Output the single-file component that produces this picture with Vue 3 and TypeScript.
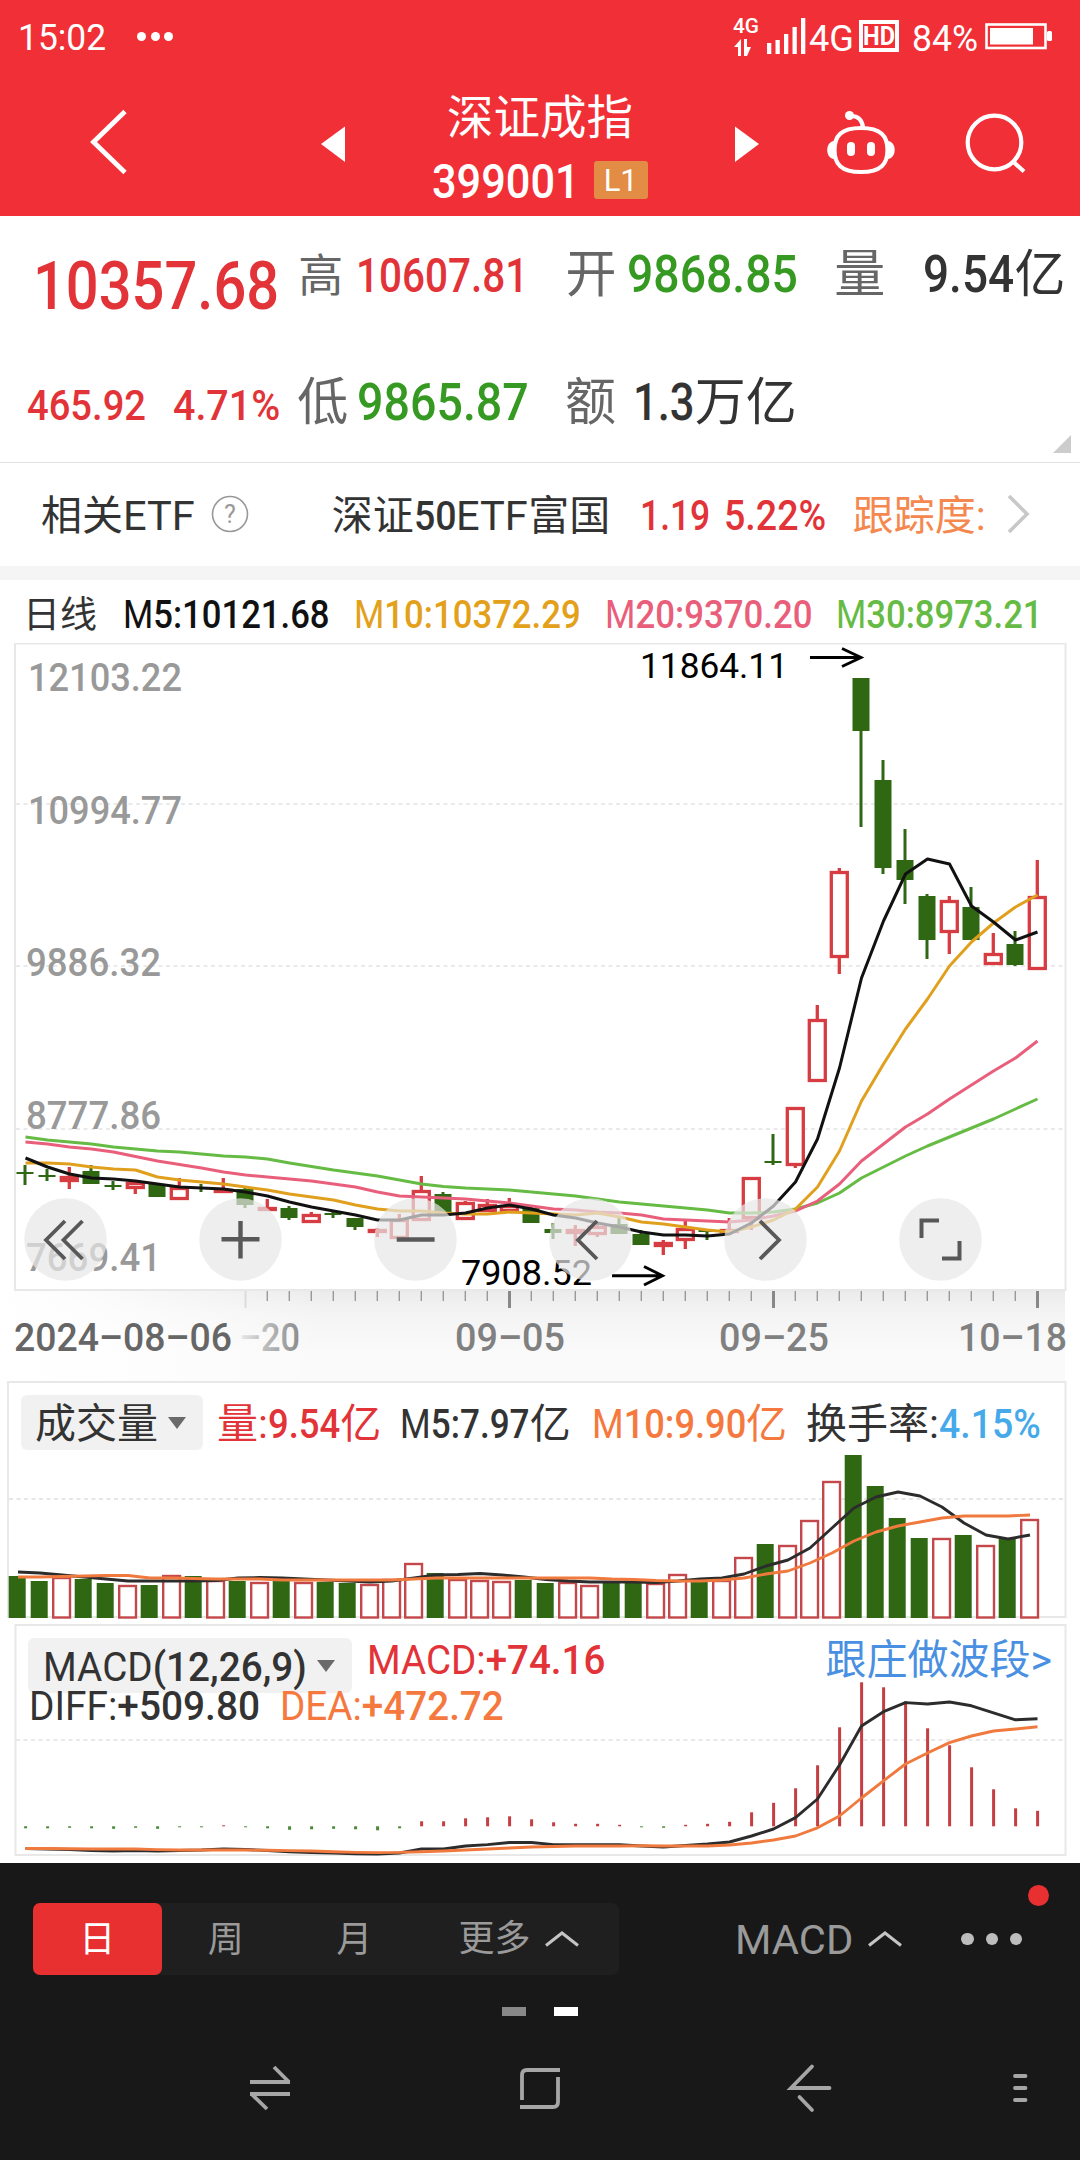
<script setup lang="ts">
// Squeezes a run of text to the given width, like the condensed numerals of the quote font.
const vFit = {
  mounted(el: HTMLElement, binding: { value: number }) {
    const natural = el.offsetWidth
    if (!natural) return
    el.style.transform = `scaleX(${binding.value / natural})`
    el.style.marginRight = `${binding.value - natural}px`
  },
}

type Candle = [kind: 'u' | 'd', high: number, top: number, bottom: number, low: number]

const candles: Candle[] = [
  ['d', 1165, 1172, 1174, 1185], ['d', 1169, 1175, 1177, 1181], ['u', 1167, 1176, 1182, 1189],
  ['d', 1165, 1171, 1184, 1184], ['d', 1181, 1185, 1187, 1190], ['u', 1181, 1182, 1189, 1194],
  ['d', 1183, 1184, 1197, 1197], ['u', 1178, 1187, 1200, 1200], ['d', 1184, 1187, 1189, 1192],
  ['u', 1178, 1189, 1193, 1193], ['d', 1187, 1189, 1205, 1208], ['u', 1199, 1207, 1211, 1211],
  ['d', 1206, 1208, 1218, 1220], ['u', 1212, 1214, 1223, 1223], ['d', 1211, 1213, 1215, 1218],
  ['d', 1218, 1218, 1227, 1230], ['u', 1228, 1229, 1233, 1237], ['u', 1214, 1219, 1239, 1239],
  ['u', 1176, 1190, 1221, 1221], ['d', 1192, 1194, 1213, 1213], ['u', 1201, 1202, 1220, 1220],
  ['u', 1199, 1204, 1212, 1212], ['u', 1198, 1205, 1212, 1212], ['d', 1207, 1208, 1223, 1223],
  ['d', 1223, 1229, 1233, 1239], ['u', 1225, 1229, 1234, 1246], ['u', 1223, 1226, 1235, 1237],
  ['d', 1217, 1224, 1234, 1234], ['d', 1230, 1234, 1245, 1245], ['u', 1240, 1242, 1247, 1255],
  ['u', 1219, 1228, 1241, 1249], ['d', 1229, 1230, 1232, 1240], ['u', 1218, 1229, 1233, 1233],
  ['u', 1177, 1177, 1219, 1230], ['d', 1134, 1161, 1163, 1165], ['u', 1107, 1107, 1166, 1168],
  ['u', 1005, 1019, 1082, 1082], ['u', 868, 871, 958, 974], ['d', 678, 678, 731, 827],
  ['d', 760, 780, 868, 874], ['d', 829, 860, 880, 904], ['d', 894, 896, 940, 959],
  ['u', 896, 900, 933, 954], ['d', 887, 907, 940, 940], ['u', 933, 953, 965, 965],
  ['d', 931, 944, 965, 966], ['u', 860, 896, 970, 970],
]

const ma5 = [1158, 1167, 1174, 1178, 1179, 1181, 1184, 1187, 1188, 1189, 1192, 1196, 1202, 1207, 1211, 1215, 1220, 1220, 1215, 1215, 1213, 1208, 1205, 1209, 1215, 1218, 1223, 1227, 1232, 1235, 1235, 1236, 1234, 1223, 1206, 1182, 1139, 1068, 978, 921, 874, 859, 864, 906, 922, 940, 932]
const ma10 = [1163, 1163, 1164, 1167, 1169, 1170, 1177, 1180, 1182, 1184, 1187, 1190, 1194, 1197, 1200, 1205, 1209, 1211, 1211, 1213, 1214, 1214, 1212, 1213, 1214, 1215, 1213, 1217, 1222, 1224, 1227, 1230, 1232, 1227, 1220, 1209, 1187, 1151, 1101, 1064, 1029, 999, 966, 942, 923, 907, 895]
const ma20 = [1142, 1144, 1147, 1149, 1152, 1156.5, 1161, 1164.5, 1168, 1172, 1175, 1177, 1179, 1181, 1184, 1187, 1192, 1196, 1197, 1198, 1199, 1201, 1203, 1206, 1209, 1210, 1212, 1213, 1215, 1219, 1220, 1221, 1222, 1220, 1216, 1211, 1201, 1184, 1161, 1144, 1127, 1114, 1099, 1085, 1071, 1058, 1041]
const ma30 = [1137, 1140, 1142, 1144, 1147, 1149, 1151, 1152, 1154, 1156, 1157, 1159, 1163, 1166.5, 1170, 1173, 1176, 1180, 1184, 1186.5, 1188, 1189, 1190, 1192, 1194, 1196, 1199, 1202, 1204, 1206, 1208, 1210, 1213, 1213, 1212, 1209, 1203, 1193, 1178, 1167, 1156, 1146, 1137, 1128, 1119, 1109, 1099]

const volumeTops = [1576, 1581, 1577, 1579, 1583, 1585, 1585, 1575, 1576, 1580, 1581, 1582, 1581, 1582, 1582, 1583, 1584, 1579, 1563, 1573, 1579, 1580, 1581, 1580, 1583, 1582, 1585, 1583, 1583, 1583, 1574, 1582, 1580, 1557, 1544, 1545, 1520, 1481, 1455, 1486, 1518, 1538, 1538, 1535, 1545, 1538, 1519]
const volM5 = [1572, 1573, 1575, 1577, 1579, 1581, 1581, 1581, 1581, 1580.5, 1578, 1577.5, 1578, 1579, 1580, 1581, 1582, 1581, 1578, 1575, 1574.5, 1573.5, 1575, 1577, 1579.5, 1581, 1582, 1582, 1582, 1582.5, 1581, 1579, 1578, 1574, 1566, 1560, 1548, 1528, 1508, 1497, 1492, 1496, 1507, 1523, 1535, 1539, 1535]
const volM10 = [1577, 1577, 1576.5, 1576, 1575.5, 1575.5, 1578, 1578, 1578.5, 1579, 1579, 1579, 1580, 1580, 1580, 1580, 1580, 1580, 1579, 1578, 1578, 1578, 1578, 1578, 1578, 1578, 1578, 1579, 1579.5, 1580.5, 1581, 1581, 1580, 1578, 1574, 1571, 1563, 1553, 1541, 1532, 1526, 1522, 1518, 1516, 1516, 1516, 1515]

const hist = [-2, -2, -1.5, -2, -2.5, -1.5, -2.5, -1, -1, 1, -1, -2, -3.5, -3, -2.5, -3, -4, -2, 5, 5, 8, 9, 10, 7, 4, 2.5, 2.5, 1.5, -1, -1.5, 1.5, 2.5, 4.5, 14, 23.5, 38, 61, 99, 144, 139, 125, 98, 81, 59, 37, 18, 15.5]
const diff = [1848.5, 1849, 1849.5, 1850.5, 1851, 1850.5, 1851, 1850.5, 1850, 1849, 1849.5, 1850.5, 1851.7, 1852.5, 1853, 1853.8, 1854, 1853, 1849, 1849, 1846, 1844.6, 1842.5, 1842.5, 1844.6, 1844.6, 1844.6, 1844.8, 1846, 1847, 1845.5, 1844, 1842, 1836, 1829, 1817.6, 1799, 1765, 1726, 1711.7, 1702.6, 1704, 1702, 1705.8, 1712.8, 1719.8, 1718.7]
const dea = [1848.5, 1848.5, 1848.8, 1849, 1849, 1849, 1849.6, 1850, 1850, 1850, 1850, 1850.3, 1850.6, 1851, 1851.8, 1852.4, 1852.6, 1852.4, 1851.7, 1851, 1850, 1849, 1848, 1847, 1846.5, 1846, 1846, 1846, 1845.8, 1846, 1846, 1846, 1845, 1843, 1840, 1836, 1827.8, 1816, 1798, 1780.8, 1764, 1753, 1742.6, 1736, 1731, 1729, 1726.8]

const STEP = 22
const line = (ys: number[], start: number): string => ys.map((y, i) => `${start + i * STEP},${y}`).join(' ')

const smallTicks = Array.from({ length: 35 }, (_, k) => k + 11).filter((i) => i !== 22 && i !== 34)
const priceLabels = [
  { t: '12103.22', x: 28, y: 691, w: 154 },
  { t: '10994.77', x: 28, y: 824, w: 154 },
  { t: '9886.32', x: 26, y: 976, w: 135 },
  { t: '8777.86', x: 26, y: 1129, w: 135 },
  { t: '7669.41', x: 26, y: 1271, w: 135 },
]
</script>

<template>
  <div class="screen">
    <header class="top">
      <div class="status">
        <span v-fit="88" class="clock">15:02</span>
        <i class="pip first"></i><i class="pip"></i><i class="pip"></i>
        <svg class="signal" width="330" height="72" viewBox="730 0 330 72" fill="#fff">
          <text x="733" y="33" font-size="21" font-weight="500" textLength="26" lengthAdjust="spacingAndGlyphs">4G</text>
          <path d="M741 39v17h-3v-9h-4zM744 56V39h3v8h4l-4 9z" />
          <rect x="767" y="43" width="4.3" height="11" /><rect x="775.5" y="40" width="4.3" height="14" />
          <rect x="784" y="34" width="4.3" height="20" /><rect x="792.5" y="27" width="4.3" height="27" />
          <rect x="801" y="18" width="4.3" height="36" />
          <text x="809" y="51" font-size="37" textLength="45" lengthAdjust="spacingAndGlyphs">4G</text>
          <rect x="861" y="22" width="36" height="28" fill="none" stroke="#fff" stroke-width="4" />
          <text x="863" y="45" font-size="25" font-weight="700" textLength="32" lengthAdjust="spacingAndGlyphs">HD</text>
          <text x="912" y="50.500" font-size="36" textLength="66" lengthAdjust="spacingAndGlyphs">84%</text>
          <rect x="986.5" y="24.5" width="59" height="23.5" fill="none" stroke="#fff" stroke-width="2.6" />
          <rect x="990" y="28" width="43" height="16.5" /><rect x="1047" y="31" width="5" height="10" rx="1.5" />
        </svg>
      </div>
      <div class="titlebar">
        <svg class="side" width="400" height="144" viewBox="0 72 400 144">
          <path d="M125 111.5 93.5 142 125 172.500" fill="none" stroke="#fff" stroke-width="4.800" />
          <path d="M321 144 345 126.500V162z" fill="#fff" />
        </svg>
        <div class="title">
          <div class="name">深证成指</div>
          <div class="code"><span v-fit="148" class="digits">399001</span><span class="badge">L1</span></div>
        </div>
        <svg class="side" width="400" height="144" viewBox="680 72 400 144" fill="none" stroke="#fff" stroke-width="4.200">
          <path d="M735 126.500 759 144 735 162z" fill="#fff" stroke="none" />
          <path d="M861 128c20 0 26.500 8 26.500 22s-6.500 22-26.500 22-26.500-8-26.500-22 6.500-22 26.500-22z" />
          <path d="M863 127c-1-7-5-11-12-11" />
          <circle cx="849.500" cy="115.500" r="4.500" fill="#fff" stroke="none" />
          <path d="M834 141c-9 1-9 17 0 18zM888 141c9 1 9 17 0 18z" fill="#fff" stroke="none" />
          <rect x="847" y="142" width="8" height="14" rx="4" fill="#fff" stroke="none" />
          <rect x="867" y="142" width="8" height="14" rx="4" fill="#fff" stroke="none" />
          <circle cx="994.500" cy="142.500" r="26.800" />
          <path d="M1013 161.500 1024 171.500" />
        </svg>
      </div>
    </header>

    <section class="quote">
      <div class="qrow r1">
        <span v-fit="246" class="price red">10357.68</span>
        <span class="lab high">高</span><span v-fit="172" class="n47 red g15">10607.81</span>
        <span class="lab big open">开</span><span v-fit="171" class="n52 green g12">9868.85</span>
        <span class="lab big vol">量</span><span v-fit="91" class="n52 g38">9.54</span><span class="cjk51">亿</span>
      </div>
      <div class="qrow r2">
        <span v-fit="119" class="n42 red">465.92</span><span v-fit="107" class="n42 red g27">4.71%</span>
        <span class="lab big low">低</span><span v-fit="172" class="n52 green g9">9865.87</span>
        <span class="lab big amt">额</span><span v-fit="62" class="n52 g16">1.3</span><span class="cjk51">万亿</span>
      </div>
      <i class="corner"></i>
    </section>

    <section class="etf">
      <span class="t41">相关</span><span v-fit="72" class="lat">ETF</span>
      <svg class="help" width="38" height="38" viewBox="0 0 38 38">
        <circle cx="19" cy="19" r="17.500" fill="none" stroke="#999" stroke-width="1.600" />
        <text x="19" y="28" text-anchor="middle" font-size="25" fill="#999">?</text>
      </svg>
      <span class="t41 fund">深证</span><span v-fit="43" class="lat mid">50</span><span v-fit="72" class="lat">ETF</span><span class="t41">富国</span>
      <span v-fit="70" class="n42 red e1">1.19</span><span v-fit="102" class="n42 red e2">5.22%</span>
      <span class="t41 track">跟踪度:</span>
      <svg class="more" width="24" height="40" viewBox="0 0 24 40"><path d="M2 2 20 20 2 38" fill="none" stroke="#c8c8c8" stroke-width="3.600" /></svg>
    </section>
    <div class="band"></div>

    <section class="kline">
      <div class="legend">
        <span class="t36">日线</span>
        <span v-fit="207" class="n39 k5"><b>M</b>5:10121.68</span>
        <span v-fit="227" class="n39 k10"><b>M</b>10:10372.29</span>
        <span v-fit="208" class="n39 k20"><b>M</b>20:9370.20</span>
        <span v-fit="207" class="n39 k30"><b>M</b>30:8973.21</span>
      </div>
      <div class="plot">
        <svg width="1080" height="739" viewBox="0 643 1080 739">
          <defs>
            <linearGradient id="shade" x1="0" y1="0" x2="0" y2="1">
              <stop offset="0" stop-color="#ebebeb" /><stop offset=".25" stop-color="#f4f4f4" />
              <stop offset=".7" stop-color="#fafafa" /><stop offset="1" stop-color="#fafafa" />
            </linearGradient>
            <linearGradient id="veil" x1="0" y1="0" x2="1" y2="0">
              <stop offset="0" stop-color="#fff" /><stop offset=".3" stop-color="#fff" stop-opacity=".8" />
              <stop offset="1" stop-color="#fff" stop-opacity="0" />
            </linearGradient>
            <linearGradient id="fade" gradientUnits="userSpaceOnUse" x1="238" y1="0" x2="300" y2="0">
              <stop offset="0" stop-color="#ededed" /><stop offset=".35" stop-color="#c4c4c4" /><stop offset="1" stop-color="#8c8c8c" />
            </linearGradient>
          </defs>
          <rect x="0" y="1291" width="1065" height="91" fill="url(#shade)" />
          <rect x="0" y="1291" width="330" height="91" fill="url(#veil)" />
          <rect x="15" y="643.500" width="1050.500" height="646.500" fill="#fff" stroke="#e8e8e8" stroke-width="2" />
          <path d="M16 804H1065M16 966H1065M16 1129H1065" stroke="#e4e4e4" stroke-width="1.400" stroke-dasharray="4 3.500" />
          <g fill="#999" font-size="39.500" font-weight="500">
            <text v-for="l in priceLabels" :key="l.t" :x="l.x" :y="l.y" :textLength="l.w" lengthAdjust="spacingAndGlyphs">{{ l.t }}</text>
          </g>
          <template v-for="(c, i) in candles" :key="i">
            <g v-if="c[0] === 'd'" fill="#2f6713">
              <rect :x="25 + i * STEP - 1.5" :y="c[1]" width="3" :height="c[4] - c[1]" />
              <rect :x="25 + i * STEP - 8.5" :y="c[2]" width="17" :height="c[3] - c[2]" />
            </g>
            <g v-else fill="#fff" stroke="#d63c41" stroke-width="3.300">
              <path :d="`M${25.3 + i * STEP} ${c[1]}V${c[2]}M${25.3 + i * STEP} ${c[3]}V${c[4]}`" />
              <rect :x="25.3 + i * STEP - 8" :y="c[2] + 1.5" width="16" :height="Math.max(c[3] - c[2] - 3, 1)" />
            </g>
          </template>
          <g fill="none" stroke-width="3" stroke-linejoin="round">
            <polyline :points="line(ma30, 25.5)" stroke="#66bb44" />
            <polyline :points="line(ma20, 25.5)" stroke="#e95f7b" />
            <polyline :points="line(ma10, 25.5)" stroke="#e0a01e" />
            <polyline :points="line(ma5, 25.5)" stroke="#111" />
          </g>
          <g font-size="35" fill="#000">
            <text x="640" y="678" textLength="148" lengthAdjust="spacingAndGlyphs">11864.11</text>
            <text x="461" y="1285" textLength="131" lengthAdjust="spacingAndGlyphs">7908.52</text>
          </g>
          <g fill="none" stroke="#000" stroke-width="2.900">
            <path d="M810 657.500H860M842 648.500 861 657.500 842 666.500" />
            <path d="M612 1275.700H662M644 1266.500 662.500 1275.700 644 1285" />
          </g>
          <path v-for="i in smallTicks" :key="i" :d="`M${25.3 + i * STEP} 1291V1301`" stroke="#999" stroke-width="1.400" />
          <path d="M509.500 1291V1308M773.500 1291V1308M1037.500 1291V1308" stroke="#888" stroke-width="3" />
          <path d="M245.500 1291V1308" stroke="#dcdcdc" stroke-width="2" />
          <g font-size="39.500" font-weight="500" fill="#808080">
            <text x="14" y="1351" textLength="218" lengthAdjust="spacingAndGlyphs" fill="#666">2024–08–06</text>
            <text x="239" y="1351" textLength="61" lengthAdjust="spacingAndGlyphs" fill="url(#fade)">–20</text>
            <text x="455" y="1351" textLength="110" lengthAdjust="spacingAndGlyphs">09–05</text>
            <text x="719" y="1351" textLength="110" lengthAdjust="spacingAndGlyphs">09–25</text>
            <text x="958" y="1351" textLength="109" lengthAdjust="spacingAndGlyphs">10–18</text>
          </g>
        </svg>
        <svg class="controls" width="1080" height="90" viewBox="0 1195 1080 90" fill="none" stroke="#585858" stroke-width="3.800">
          <g fill="rgba(231,231,231,.7)" stroke="none">
            <circle v-for="n in 6" :key="n" :cx="65.5 + (n - 1) * 175" cy="1239.500" r="41.300" />
          </g>
          <path d="M65 1221 46 1240 65 1259M82.500 1221 63.500 1240 82.500 1259" />
          <path d="M221.500 1239.300H259.500M240.500 1221V1258.500" stroke-width="4.400" />
          <path d="M396.700 1239.500H434.600" stroke-width="4.400" />
          <path d="M597 1221 578 1240 597 1259M760 1221 779 1240 760 1259" />
          <path d="M939 1220.500H921.500V1238M959.500 1241V1258.500H942" stroke-width="4" />
        </svg>
      </div>
    </section>

    <section class="volume">
      <svg class="back" width="1080" height="241" viewBox="0 1381 1080 241">
        <rect x="8" y="1382" width="1057.500" height="235" fill="#fff" stroke="#e8e8e8" stroke-width="2" />
        <path d="M9 1499H1065" stroke="#dedede" stroke-width="1.400" stroke-dasharray="4 3.500" />
        <template v-for="(y, i) in volumeTops" :key="i">
          <rect v-if="candles[i][0] === 'd'" :x="8.7 + i * STEP" :y="y" width="17" :height="1618 - y" fill="#2f6713" />
          <rect v-else :x="9.2 + i * STEP" :y="y + 1" width="16.800" :height="1616.500 - y" fill="#fff" stroke="#c4484b" stroke-width="2.400" />
        </template>
        <g fill="none" stroke-width="2.900" stroke-linejoin="round">
          <polyline :points="line(volM5, 18)" stroke="#2c2c2c" />
          <polyline :points="line(volM10, 18)" stroke="#f07a3e" />
        </g>
      </svg>
      <div class="info">
        <div class="chip"><span class="t40">成交量</span><i class="caret"></i></div>
        <span class="t40 red v1">量:</span><span v-fit="72" class="n40 red">9.54</span><span class="t40 red">亿</span>
        <span v-fit="130" class="n40 v2"><b>M</b>5:7.97</span><span class="t40">亿</span>
        <span v-fit="154" class="n40 orange v3"><b>M</b>10:9.90</span><span class="t40 orange">亿</span>
        <span class="t40 v4">换手率:</span><span v-fit="102" class="n40 blue">4.15%</span>
      </div>
    </section>

    <section class="macd">
      <svg class="back" width="1080" height="241" viewBox="0 1622 1080 241">
        <rect x="15.500" y="1625" width="1050" height="230" fill="#fff" stroke="#e8e8e8" stroke-width="2" />
        <path d="M16 1740H1065" stroke="#e2e2e2" stroke-width="1.400" stroke-dasharray="4 3.500" />
        <rect v-for="(h, i) in hist" :key="i" :x="24.1 + i * STEP" :y="h > 0 ? 1826.3 - h : 1826.3" width="3" :height="Math.abs(h)" :fill="h > 0 ? '#c43f42' : '#4a8a38'" />
        <g fill="none" stroke-width="2.900" stroke-linejoin="round">
          <polyline :points="line(diff, 25.5)" stroke="#2c2c2c" />
          <polyline :points="line(dea, 25.5)" stroke="#f07a3e" />
        </g>
      </svg>
      <div class="info m">
        <div class="chip wide"><span v-fit="264" class="n40"><b>MACD</b>(12,26,9)</span><i class="caret"></i></div>
        <span v-fit="238" class="n40 red m1"><b>MACD:</b>+74.16</span>
        <span class="link">跟庄做波段&gt;</span>
      </div>
      <div class="sub"><span v-fit="231" class="n40"><b>DIFF:</b>+509.80</span><span v-fit="224" class="n40 orange m2"><b>DEA:</b>+472.72</span></div>
    </section>

    <footer class="dock">
      <div class="tools">
        <div class="tabs">
          <span class="tab on">日</span><span class="tab">周</span><span class="tab">月</span>
          <span class="tab wide">更多<svg width="34" height="16" viewBox="0 0 34 16"><path d="M1 14.500 17 2 33 14.500" fill="none" stroke="#c4c4c4" stroke-width="3" /></svg></span>
        </div>
        <div class="ind"><span v-fit="118">MACD</span><svg width="34" height="16" viewBox="0 0 34 16"><path d="M1 14.500 17 2 33 14.500" fill="none" stroke="#c4c4c4" stroke-width="3" /></svg></div>
        <div class="dots"><i></i><i></i><i></i><b></b></div>
      </div>
      <div class="pager"><i></i><i class="cur"></i></div>
      <svg class="nav" width="1080" height="60" viewBox="0 2058 1080 60" fill="none" stroke="#a6a6a6" stroke-width="3.800">
        <path d="M250 2082H290M274 2067 289 2082M290 2094H250M251.500 2094 267 2109" />
        <path d="M560 2070H527Q522 2070 522 2075V2100M520 2107H553Q558 2107 558 2102V2077" />
        <path d="M829.500 2088H791L812 2066.500M799.500 2097 812 2110" stroke-linecap="round" />
        <path d="M1015 2076H1025.500M1015 2088H1025.500M1015 2100H1025.500" stroke-linecap="round" />
      </svg>
    </footer>
  </div>
</template>

<style>
html,
body {
  margin: 0;
  background: #fff;
}
</style>

<style scoped>
.screen {
  width: 1080px;
  height: 2160px;
  overflow: hidden;
  display: flex;
  flex-direction: column;
  background: #fff;
  color: #333;
  font-family: Roboto, "Noto Sans CJK SC", sans-serif;
  line-height: 1;
  white-space: nowrap;
}
.screen span {
  display: block;
  flex: none;
  transform-origin: 0 50%;
}
.screen span b { font-weight: 400; }
svg {
  display: block;
  flex: none;
}
.red { color: #e23338; }
.green { color: #369a22; }
.orange { color: #f5793f; }
.blue { color: #45a9ea; }

.top {
  height: 216px;
  flex: none;
  background: #f12f36;
  color: #fff;
}
.status {
  height: 72px;
  display: flex;
  align-items: center;
}
.clock { font-size: 37px; margin-left: 18px; padding-top: 2px; }
.pip { width: 9px; height: 9px; border-radius: 50%; background: #fff; margin-left: 4.500px; }
.pip.first { margin-left: 31px; }
.signal { margin-left: auto; margin-right: 20px; }
.titlebar {
  height: 144px;
  display: flex;
}
.title {
  width: 280px;
  flex: none;
}
.name {
  font-size: 46.500px;
  line-height: 56px;
  padding-top: 18px;
  text-align: center;
}
.code {
  display: flex;
  align-items: center;
  padding-left: 32px;
  margin-top: 15px;
  height: 38px;
}
.digits { font-size: 48px; font-weight: 500; padding-top: 3px; }
.badge {
  width: 54px;
  height: 38px;
  line-height: 39px;
  margin-left: 14px;
  border-radius: 3px;
  background: #e28c46;
  font-size: 31px;
  text-align: center;
}

.quote {
  height: 246px;
  flex: none;
  border-bottom: 1px solid #e2e2e2;
  position: relative;
}
.qrow {
  display: flex;
  align-items: baseline;
}
.qrow::before,
.etf::before,
.legend::before,
.info::before,
.sub::before {
  content: "";
  width: 0;
  flex: none;
}
.r1 { height: 120px; }
.r1::before { height: 76px; }
.r2 { height: 110px; }
.r2::before { height: 84px; }
.price { font-size: 67px; font-weight: 500; margin-left: 33px; position: relative; top: 17px; }
.lab { color: #666; font-size: 45px; }
.lab.big { font-size: 51px; }
.n39 { font-size: 39px; font-weight: 500; }
.n40 { font-size: 40px; font-weight: 500; }
.n42 { font-size: 42px; font-weight: 500; }
.n47 { font-size: 48px; font-weight: 500; }
.n52 { font-size: 52px; font-weight: 500; }
.cjk51 { font-size: 51px; }
.high { margin-left: 19px; }
.g15 { margin-left: 13px; }
.open { margin-left: 37px; }
.g12 { margin-left: 10px; }
.vol { margin-left: 37px; }
.g38 { margin-left: 38px; }
.r2 .n42:first-of-type { margin-left: 27px; }
.r2 .n42.g27 { margin-left: 27px; }
.low { margin-left: 17px; }
.g9 { margin-left: 9px; }
.amt { margin-left: 36px; }
.g16 { margin-left: 17px; }
.corner {
  position: absolute;
  right: 9px;
  bottom: 9px;
  border: 9px solid transparent;
  border-right-color: #ccc;
  border-bottom-color: #ccc;
}

.etf {
  height: 103px;
  flex: none;
  display: flex;
  align-items: baseline;
}
.etf::before { height: 67px; }
.t41 { font-size: 41px; }
.etf > .t41:first-of-type { margin-left: 41px; }
.lat { font-size: 41px; }
.mid { font-weight: 500; }
.help { align-self: flex-start; margin: 32px 0 0 16px; }
.etf > .fund { margin-left: 83px; }
.e1 { margin-left: 30px; }
.e2 { margin-left: 13px; }
.track { margin-left: 27px; color: #f5884f; }
.more { align-self: flex-start; margin: 31px 0 0 21px; }
.band {
  height: 14px;
  flex: none;
  background: #f5f5f5;
}

.kline { height: 801px; flex: none; }
.legend {
  height: 63px;
  display: flex;
  align-items: baseline;
}
.legend::before { height: 48px; }
.t36 { font-size: 37px; margin-left: 23px; }
.k5 { color: #111; margin-left: 26px; }
.k10 { color: #e3a11b; margin-left: 24px; }
.k20 { color: #e95f7b; margin-left: 25px; }
.k30 { color: #66bb44; margin-left: 23px; }
.plot { position: relative; }
.controls { position: absolute; left: 0; top: 552px; }

.volume,
.macd {
  height: 241px;
  flex: none;
  position: relative;
}
.back { position: absolute; left: 0; top: 0; }
.info,
.sub {
  position: relative;
  display: flex;
  align-items: baseline;
}
.info::before { height: 57px; }
.t40 { font-size: 41px; }
.chip {
  align-self: flex-start;
  display: flex;
  align-items: center;
  box-sizing: border-box;
  flex: none;
  width: 182px;
  height: 55px;
  margin: 14px 0 0 21px;
  padding-left: 14px;
  border-radius: 6px;
  background: #f1f1f1;
}
.chip > span { padding-top: 4px; }
.caret {
  border: 9px solid transparent;
  border-top: 12px solid #6a6a6a;
  border-bottom: 0;
  margin-left: 10px;
}
.v1 { margin-left: 14px; }
.v2 { margin-left: 19px; }
.v3 { margin-left: 21px; }
.v4 { margin-left: 19px; }
.m { height: 66px; }
.m::before { height: 52px; }
.chip.wide { width: 324px; margin: 16px 0 0 28px; padding-left: 15px; }
.m1 { margin-left: 15px; }
.link { margin-left: auto; margin-right: 28px; font-size: 41px; color: #4a90e2; }
.sub::before { height: 29px; }
.sub .n40:first-of-type { margin-left: 29px; }
.sub .m2.n40 { margin-left: 20px; }
.sub { top: -1px; }

.dock {
  flex: 1;
  background: #181818;
  color: #9a9a9a;
}
.tools {
  display: flex;
  align-items: center;
  padding-top: 40px;
  height: 72px;
}
.tabs {
  display: flex;
  width: 586px;
  height: 72px;
  margin-left: 33px;
  flex: none;
  border-radius: 7px;
  background: #1f1f1f;
}
.screen .tab {
  width: 128.500px;
  height: 72px;
  line-height: 74px;
  font-size: 36px;
  text-align: center;
}
.tab.on { background: #e83031; color: #fff; border-radius: 7px; }
.screen .tab.wide { width: 200px; display: flex; align-items: center; justify-content: center; gap: 14px; }
.ind {
  display: flex;
  align-items: center;
  margin-left: 116px;
  font-size: 41px;
  gap: 15px;
}
.ind span { padding-top: 3px; }
.dots {
  position: relative;
  display: flex;
  gap: 12px;
  margin-left: 59px;
}
.dots i { width: 12.400px; height: 12.400px; border-radius: 50%; background: #bdbdbd; }
.dots b {
  position: absolute;
  left: 67px;
  top: -48px;
  width: 21px;
  height: 21px;
  border-radius: 50%;
  background: #e83031;
}
.pager {
  display: flex;
  justify-content: center;
  gap: 28px;
  margin-top: 32px;
}
.pager i { width: 24px; height: 9px; background: #888; }
.pager .cur { background: #fff; }
.nav { margin-top: 42px; }
</style>
